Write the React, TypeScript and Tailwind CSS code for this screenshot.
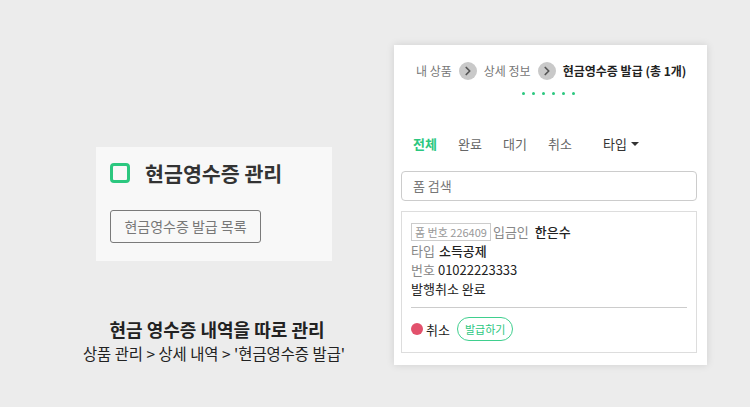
import { ChevronRight } from "lucide-react";

const font = { fontFamily: '"Noto Sans CJK KR", "Noto Sans", sans-serif' };

const Crumb = () => (
  <span className="flex h-[18px] w-[18px] shrink-0 items-center justify-center rounded-full bg-[#c9c9c9]">
    <ChevronRight className="h-[14px] w-[14px] text-[#555]" strokeWidth={3} />
  </span>
);

export default function App() {
  return (
    <div className="flex h-[407px] w-[750px] bg-[#ececec]" style={font}>
      {/* Left side */}
      <div className="flex w-[394px] flex-col">
        <div className="ml-[96px] mt-[147px] h-[114px] w-[236px] bg-[#f8f8f8] px-[14px] pt-[12px]">
          <div className="flex items-center gap-[15px]">
            <span className="h-[20px] w-[20px] rounded-[4px] border-[3px] border-[#2bc77f]" />
            <span className="text-[20.6px] font-bold leading-[28px] text-[#333]">현금영수증 관리</span>
          </div>
          <button className="mt-[23px] h-[33px] w-[151px] rounded-[3px] border border-[#7a7a7a] text-[14px] text-[#777]">
            현금영수증 발급 목록
          </button>
        </div>
        <div className="mt-[55px] flex flex-col items-center pl-[40px] text-center">
          <div className="text-[18px] font-bold leading-[26px] text-[#222]">현금 영수증 내역을 따로 관리</div>
          <div className="-ml-[6px] text-[15.4px] leading-[22px] text-[#222]">상품 관리 &gt; 상세 내역 &gt; '현금영수증 발급'</div>
        </div>
      </div>

      {/* Right panel */}
      <div className="mt-[45px] h-[320px] w-[313px] bg-white pl-[7px] pr-[10px] shadow-[0_0_8px_rgba(0,0,0,0.12)]">
        <div className="flex items-center gap-[7px] whitespace-nowrap pl-[15px] pt-[16px] text-[12px] leading-[20px]">
          <span className="text-[#777]">내 상품</span>
          <Crumb />
          <span className="text-[#777]">상세 정보</span>
          <Crumb />
          <span className="font-bold text-[#222]">현금영수증 발급 (총 1개)</span>
        </div>
        <div className="mt-[11px] flex justify-center gap-[7px] pr-[2px]">
          {[0, 1, 2, 3, 4, 5].map((i) => (
            <span key={i} className="h-[3px] w-[3px] rounded-full bg-[#2bc77f]" />
          ))}
        </div>
        <div className="mt-[39px] flex items-center pl-[12px] text-[13px] leading-[20px]">
          <span className="w-[45px] font-bold text-[#2bc77f]">전체</span>
          <span className="w-[45px] text-[#666]">완료</span>
          <span className="w-[45px] text-[#666]">대기</span>
          <span className="w-[55px] text-[#666]">취소</span>
          <span className="flex items-center gap-[4px] text-[#333]">
            타입
            <span className="h-0 w-0 border-x-[4px] border-t-[4px] border-x-transparent border-t-[#333]" />
          </span>
        </div>
        <div className="mt-[17px] flex h-[30px] items-center rounded-[4px] border border-[#ccc] pl-[11px] text-[13px] text-[#777]">
          폼 검색
        </div>
        <div className="mt-[10px] h-[142px] border border-[#ddd] px-[9px] pt-[10px] text-[13px] leading-[19px] text-[#222]">
          <div className="flex items-center">
            <span className="border border-[#ccc] px-[3px] text-[11px] leading-[16px] text-[#999]">폼 번호 226409</span>
            <span className="ml-[2px] text-[#888]">입금인</span>
            <span className="ml-[6px] font-medium">한은수</span>
          </div>
          <div>
            <span className="text-[#888]">타입</span>
            <span className="ml-[4px] font-medium">소득공제</span>
          </div>
          <div>
            <span className="text-[#888]">번호</span>
            <span className="ml-[3px]">01022223333</span>
          </div>
          <div>발행취소 완료</div>
          <div className="mt-[9px] border-t border-[#ccc]" />
          <div className="mt-[9px] flex items-center">
            <span className="h-[12px] w-[12px] rounded-full bg-[#e2516c]" />
            <span className="ml-[3px]">취소</span>
            <span className="ml-[7px] flex h-[24px] items-center rounded-full border border-[#3fcf8e] px-[7px] text-[11px] text-[#2bc77f]">
              발급하기
            </span>
          </div>
        </div>
      </div>
    </div>
  );
}
